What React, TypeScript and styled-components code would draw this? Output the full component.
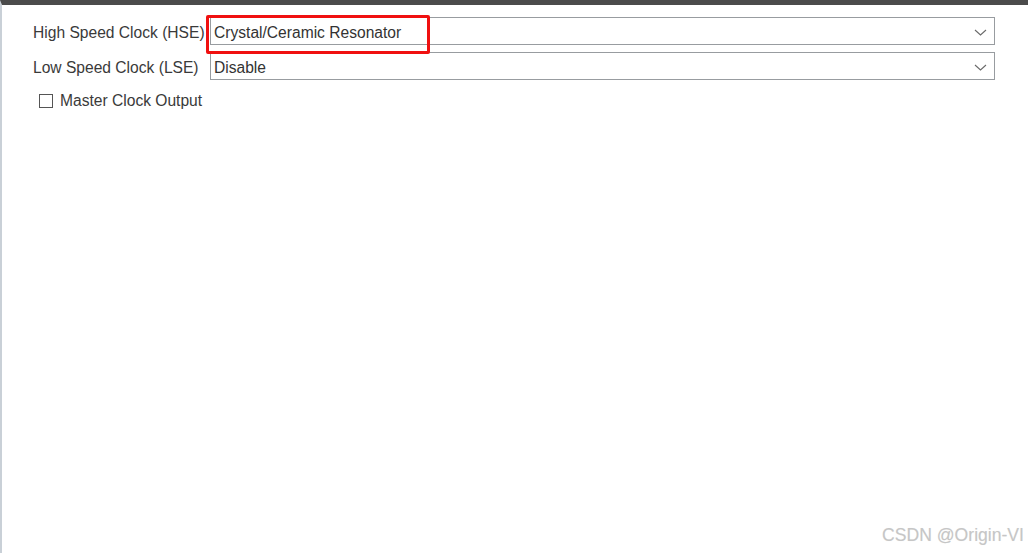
import styled, { createGlobalStyle } from 'styled-components'

const GlobalStyle = createGlobalStyle`
  html, body {
    margin: 0;
    padding: 0;
    background: #ffffff;
  }
  body {
    font-family: "Liberation Sans", Arial, sans-serif;
  }
`

const Frame = styled.div`
  position: relative;
  box-sizing: border-box;
  width: 1028px;
  height: 553px;
  border-top: 5px solid #4b4b4b;
  border-left: 2px solid #c9d0d7;
  background: #ffffff;
  overflow: hidden;
`

const Form = styled.div`
  display: flex;
  flex-direction: column;
  gap: 7px;
  padding: 12px 33px 0 31px;
`

const Row = styled.div`
  display: grid;
  grid-template-columns: 177px 1fr;
  align-items: center;
  height: 28px;
`

const Label = styled.span`
  padding-top: 3px;
  font-size: 15.6px;
  color: #3a3a3a;
  white-space: nowrap;
`

const SelectBox = styled.div`
  position: relative;
  box-sizing: border-box;
  height: 28px;
  border: 1px solid #989ca0;
  display: flex;
  align-items: center;
  padding: 3px 0 0 3px;
  font-size: 15.6px;
  color: #333333;
  background: #ffffff;
`

const Chevron = styled.svg`
  position: absolute;
  right: 7px;
  top: 11px;
`

const Highlight = styled.div`
  position: absolute;
  z-index: 2;
  left: -5px;
  top: -3px;
  width: 224px;
  height: 39px;
  box-sizing: border-box;
  border: 3px solid #f01010;
  border-radius: 2px;
  pointer-events: none;
`

const CheckRow = styled.label`
  display: flex;
  align-items: center;
  gap: 7px;
  margin-top: 5px;
  padding-left: 6px;
  font-size: 15.6px;
  color: #3a3a3a;
`

const CheckBox = styled.span`
  box-sizing: border-box;
  width: 14px;
  height: 14px;
  border: 1px solid #555555;
  background: #ffffff;
`

const Watermark = styled.div`
  position: absolute;
  right: 4px;
  bottom: 7px;
  font-size: 17.6px;
  color: #c6c6c6;
  text-shadow: 0 0 1px rgba(0, 0, 0, 0.08);
`

function Select({ value, marked }: { value: string; marked?: boolean }) {
  return (
    <SelectBox>
      {value}
      <Chevron width="13" height="8" viewBox="0 0 13 8">
        <polyline points="1,1 6.5,6 12,1" fill="none" stroke="#6a6a6a" strokeWidth="1.1" />
      </Chevron>
      {marked && <Highlight />}
    </SelectBox>
  )
}

function App() {
  return (
    <>
      <GlobalStyle />
      <Frame>
        <Form>
          <Row>
            <Label>High Speed Clock (HSE)</Label>
            <Select value="Crystal/Ceramic Resonator" marked />
          </Row>
          <Row>
            <Label>Low Speed Clock (LSE)</Label>
            <Select value="Disable" />
          </Row>
          <CheckRow>
            <CheckBox />
            Master Clock Output
          </CheckRow>
        </Form>
        <Watermark>CSDN @Origin-VI</Watermark>
      </Frame>
    </>
  )
}

export default App
